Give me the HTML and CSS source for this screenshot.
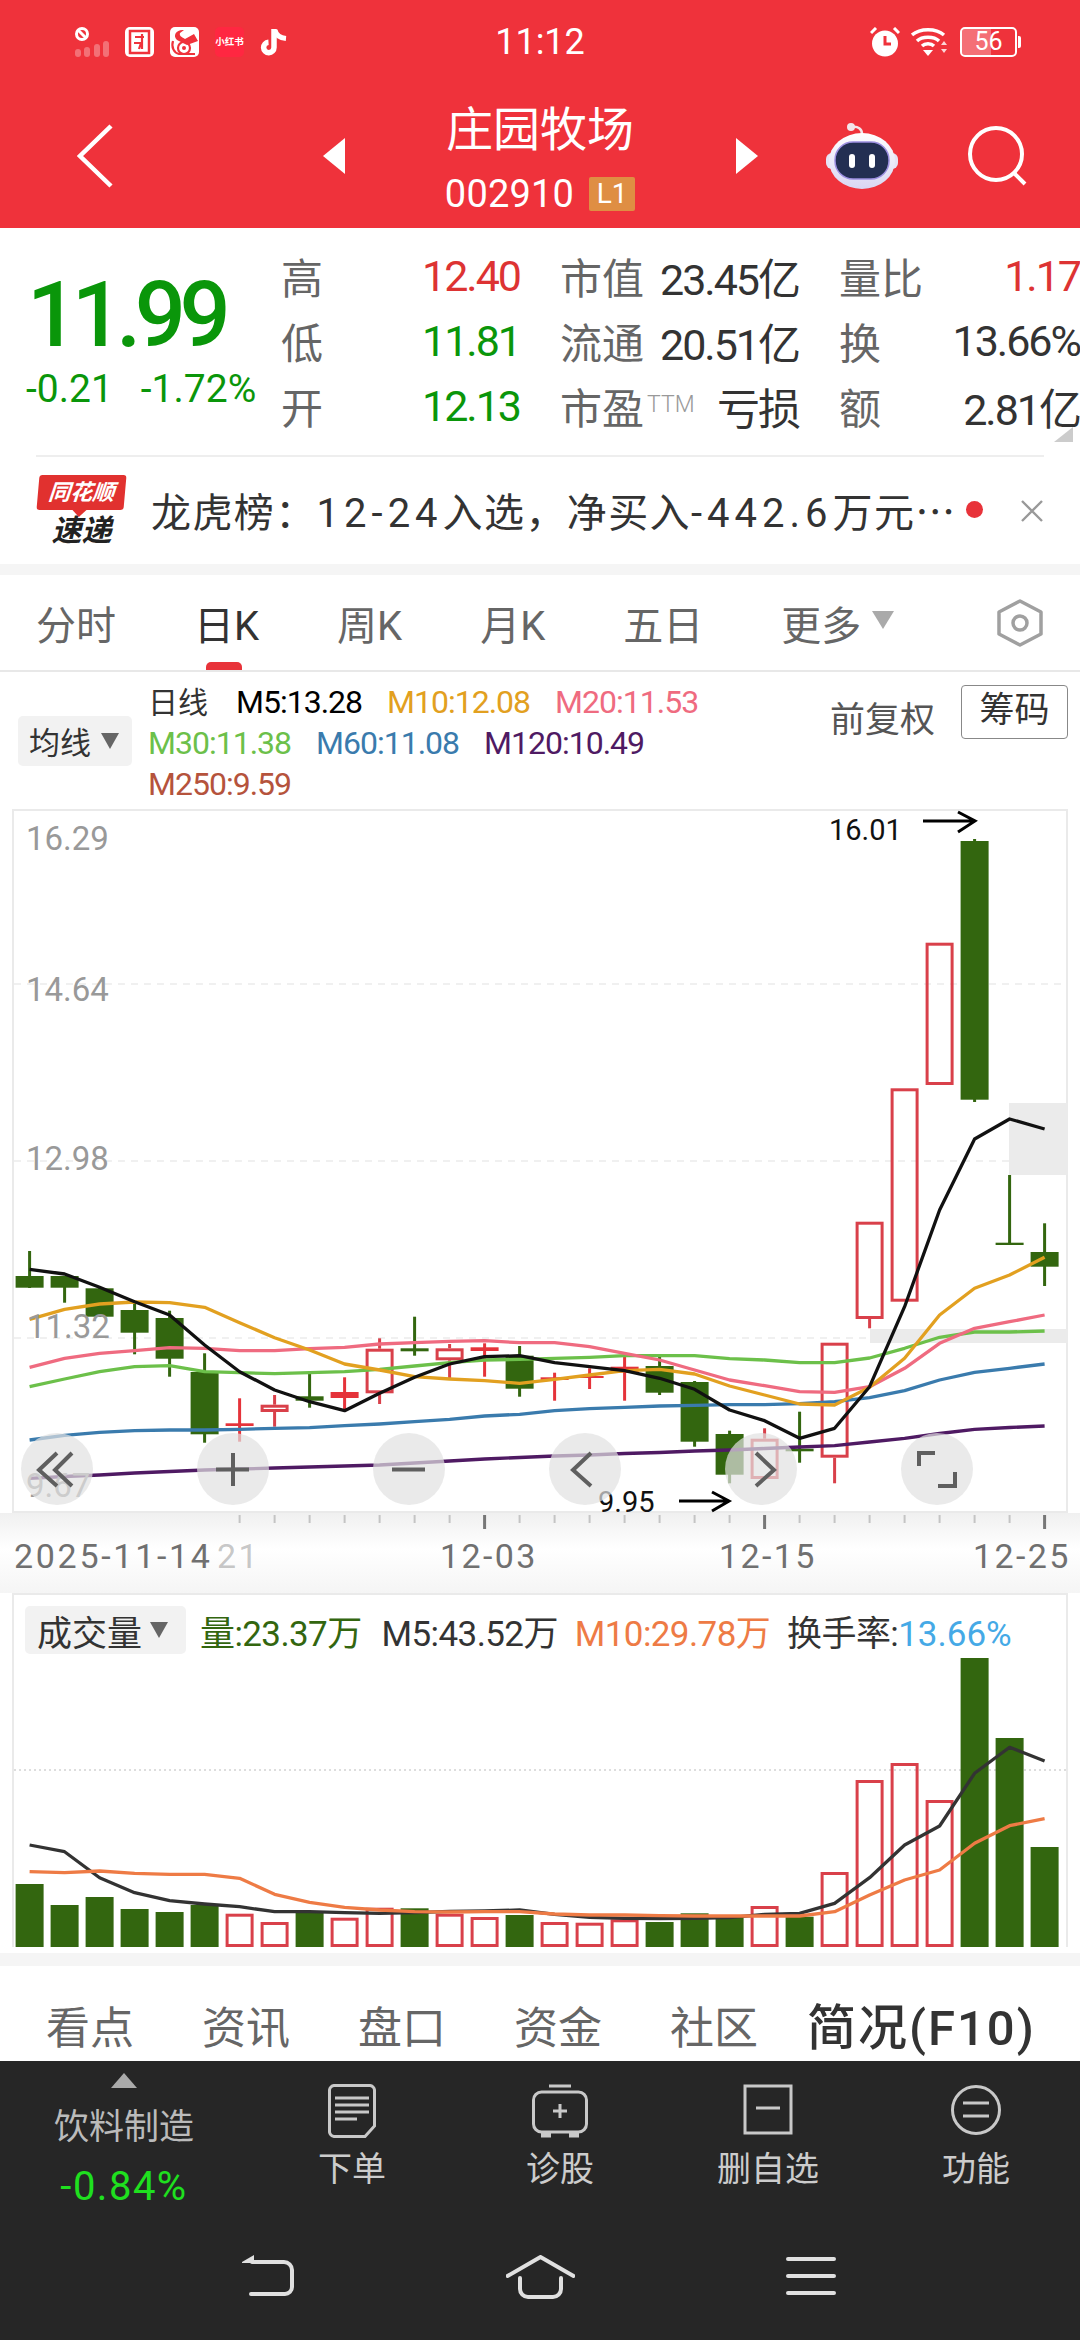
FILE: index.html
```html
<!DOCTYPE html>
<html lang="zh-CN">
<head>
  <meta charset="UTF-8">
  <meta name="viewport" content="width=device-width, initial-scale=1.0">
  <title>庄园牧场 002910</title>
  <link rel="stylesheet" href="styles.css">
</head>
<body>
  <div class="top">
    <div class="status-bar">
      <div class="status-left">
        <svg class="signal-icon" width="38" height="32" viewBox="0 0 38 32">
          <circle cx="8" cy="8" r="5.5" fill="none" stroke="#fff" stroke-width="3"/>
          <line x1="4" y1="4" x2="12" y2="12" stroke="#fff" stroke-width="3"/>
          <g fill="#fff" opacity="0.3">
            <rect x="1" y="23" width="6" height="8" rx="3"/>
            <rect x="10" y="21" width="6" height="10" rx="3"/>
            <rect x="20" y="18" width="6" height="13" rx="3"/>
            <rect x="29" y="15" width="6" height="16" rx="3"/>
          </g>
        </svg>
        <svg width="29" height="30" viewBox="0 0 29 30">
          <rect width="29" height="30" rx="5" fill="#fff"/>
          <rect x="5" y="4" width="19" height="22" fill="none" stroke="#ef323b" stroke-width="2.5"/>
          <path d="M10 10H19M9 16H16L14 22M17 7V22" fill="none" stroke="#ef323b" stroke-width="2.2"/>
        </svg>
        <svg width="29" height="30" viewBox="0 0 29 30">
          <rect width="29" height="30" rx="5" fill="#fff"/>
          <path d="M7 13C2 8 7 2 14 3L10 6C9 9 12 10 15 12L24 7L28 14L17 18" fill="#ef323b"/>
          <circle cx="14" cy="21" r="6" fill="none" stroke="#ef323b" stroke-width="2.2"/>
          <circle cx="14" cy="21" r="2" fill="#ef323b"/>
          <path d="M3 14C1 20 4 26 9 27H25" fill="none" stroke="#ef323b" stroke-width="2.2"/>
        </svg>
        <span class="xhs-icon">小红书</span>
        <svg width="27" height="30" viewBox="0 0 27 30">
          <path d="M14 2V20.5A5.2 5.2 0 1 1 8.5 15.3" fill="none" stroke="#fff" stroke-width="5.5"/>
          <path d="M15 3C16 8 20 11 26 11.5" fill="none" stroke="#fff" stroke-width="5"/>
        </svg>
      </div>
      <div class="status-time">11:12</div>
      <div class="status-right">
        <svg width="30" height="30" viewBox="0 0 30 30">
          <circle cx="15" cy="16.5" r="13" fill="#fff"/>
          <path d="M15 9V17H21" fill="none" stroke="#ef323b" stroke-width="3"/>
          <path d="M1 6L6 1M29 6L24 1" stroke="#fff" stroke-width="3"/>
        </svg>
        <svg width="38" height="30" viewBox="0 0 38 30">
          <g fill="none" stroke="#fff" stroke-width="3.4">
            <path d="M1 8C9 1 25 1 33 8"/>
            <path d="M6 14C11 9 23 9 28 14"/>
            <path d="M11 19C14 16 20 16 23 19"/>
          </g>
          <path d="M12 23H22L17 29Z" fill="#fff"/>
          <path d="M30 18L33 14L36 18ZM30 22H36L33 26Z" fill="#fff" opacity="0.8"/>
        </svg>
        <div class="battery">
          <div class="battery-level"></div>
          <span class="battery-num">56</span>
        </div>
      </div>
    </div>
    <div class="nav">
      <svg class="nav-back" width="36" height="64" viewBox="0 0 36 64">
        <path d="M34 2L3 32L34 62" fill="none" stroke="#fff" stroke-width="4.5"/>
      </svg>
      <div class="nav-center">
        <svg width="22" height="36" viewBox="0 0 22 36"><path d="M22 0V36L0 18Z" fill="#fff"/></svg>
        <div class="stock-name">
          <div class="stock-title">庄园牧场</div>
          <div class="stock-code-row">
            <span class="stock-code">002910</span>
            <span class="level-badge">L1</span>
          </div>
        </div>
        <svg width="22" height="36" viewBox="0 0 22 36"><path d="M0 0V36L22 18Z" fill="#fff"/></svg>
      </div>
      <div class="nav-right">
        <svg width="72" height="66" viewBox="0 0 72 66">
          <defs>
            <linearGradient id="robot-head" x1="0" y1="0" x2="0" y2="1">
              <stop offset="0" stop-color="#ffffff"/>
              <stop offset="1" stop-color="#d9d6f2"/>
            </linearGradient>
          </defs>
          <circle cx="25" cy="4" r="4" fill="#f3e6ea"/>
          <path d="M26 4C32 3 36 6 36 11" fill="none" stroke="#f3e6ea" stroke-width="2.5"/>
          <rect x="0" y="30" width="72" height="16" rx="6" fill="#e6e3f5"/>
          <ellipse cx="36" cy="38" rx="33" ry="28" fill="url(#robot-head)"/>
          <rect x="9" y="19" width="54" height="37" rx="18" fill="#232f52" stroke="#9c8fe0" stroke-width="1.5"/>
          <rect x="23" y="31" width="6" height="14" rx="3" fill="#fff"/>
          <rect x="43" y="31" width="6" height="14" rx="3" fill="#fff"/>
        </svg>
        <svg width="60" height="60" viewBox="0 0 60 60">
          <circle cx="29" cy="28" r="26" fill="none" stroke="#fff" stroke-width="4"/>
          <line x1="47" y1="47" x2="58" y2="58" stroke="#fff" stroke-width="4"/>
        </svg>
      </div>
    </div>
  </div>

  <div class="quote">
    <div class="price-block">
      <div class="price">11.99</div>
      <div class="price-change">
        <span>-0.21</span>
        <span>-1.72%</span>
      </div>
    </div>
    <div class="quote-grid">
      <div class="quote-cell"><span class="quote-label">高</span><span class="quote-value up">12.40</span></div>
      <div class="quote-cell"><span class="quote-label">市值</span><span class="quote-value">23.45亿</span></div>
      <div class="quote-cell"><span class="quote-label">量比</span><span class="quote-value up">1.17</span></div>
      <div class="quote-cell"><span class="quote-label">低</span><span class="quote-value down">11.81</span></div>
      <div class="quote-cell"><span class="quote-label">流通</span><span class="quote-value">20.51亿</span></div>
      <div class="quote-cell"><span class="quote-label">换</span><span class="quote-value">13.66%</span></div>
      <div class="quote-cell"><span class="quote-label">开</span><span class="quote-value down">12.13</span></div>
      <div class="quote-cell"><span class="quote-label">市盈<sup class="ttm">TTM</sup></span><span class="quote-value">亏损</span></div>
      <div class="quote-cell"><span class="quote-label">额</span><span class="quote-value">2.81亿</span></div>
    </div>
    <div class="quote-corner"></div>
  </div>
  <div class="divider"></div>

  <div class="news">
    <div class="news-logo">
      <div class="news-flag"><span>同花顺</span></div>
      <div class="news-sub">速递</div>
    </div>
    <div class="news-text">龙虎榜：<span class="news-num">12-24</span>入选，净买入<span class="news-num">-442.6</span>万元<span class="news-more">…</span></div>
    <div class="news-dot"></div>
    <svg class="news-close" width="22" height="22" viewBox="0 0 22 22">
      <path d="M1 1L21 21M21 1L1 21" stroke="#999" stroke-width="2.4"/>
    </svg>
  </div>
  <div class="gap"></div>

  <div class="period-tabs">
    <div class="period-tab">分时</div>
    <div class="period-tab active">日K</div>
    <div class="period-tab">周K</div>
    <div class="period-tab">月K</div>
    <div class="period-tab">五日</div>
    <div class="period-tab">更多
      <svg class="tab-arrow" width="22" height="18" viewBox="0 0 22 18"><path d="M0 0H22L11 18Z" fill="#aaa"/></svg>
    </div>
    <svg class="tab-settings" width="48" height="48" viewBox="0 0 48 48">
      <path d="M24 2L45 13V35L24 46L3 35V13Z" fill="none" stroke="#a0a0a0" stroke-width="3.5" stroke-linejoin="round"/>
      <circle cx="24" cy="24" r="7" fill="none" stroke="#a0a0a0" stroke-width="3.5"/>
    </svg>
  </div>

  <div class="ma-legend">
    <div class="select-tag ma-tag">均线
      <svg width="18" height="16" viewBox="0 0 18 16"><path d="M0 0H18L9 16Z" fill="#666"/></svg>
    </div>
    <div class="ma-rows">
      <div class="ma-row"><span class="ma-day">日线</span><span class="m5">M5:13.28</span><span class="m10">M10:12.08</span><span class="m20">M20:11.53</span></div>
      <div class="ma-row"><span class="m30">M30:11.38</span><span class="m60">M60:11.08</span><span class="m120">M120:10.49</span></div>
      <div class="ma-row"><span class="m250">M250:9.59</span></div>
    </div>
    <div class="ma-right">
      <span class="ma-adjust">前复权</span>
      <span class="ma-chips">筹码</span>
    </div>
  </div>

  <div class="kline">
    <svg id="kline-svg" width="1056" height="704" viewBox="12 809 1056 704"></svg>
    <div class="kline-buttons">
      <div class="round-btn">
        <svg width="72" height="72" viewBox="0 0 72 72"><path d="M36 20L18 37L36 53M51 20L34 37L51 53"/></svg>
      </div>
      <div class="round-btn">
        <svg width="72" height="72" viewBox="0 0 72 72"><path d="M19 36.5H52M36 20V53"/></svg>
      </div>
      <div class="round-btn">
        <svg width="72" height="72" viewBox="0 0 72 72"><path d="M19 36.5H52"/></svg>
      </div>
      <div class="round-btn">
        <svg width="72" height="72" viewBox="0 0 72 72"><path d="M42 20L24 37L42 53"/></svg>
      </div>
      <div class="round-btn">
        <svg width="72" height="72" viewBox="0 0 72 72"><path d="M31 20L49 37L31 53"/></svg>
      </div>
      <div class="round-btn">
        <svg width="72" height="72" viewBox="0 0 72 72"><path d="M18 33V20H34M37 53H54V39"/></svg>
      </div>
    </div>
  </div>
  <svg id="axis-svg" class="date-axis" width="1080" height="80" viewBox="0 1513 1080 80"></svg>

  <div class="volume">
    <div class="vol-legend">
      <div class="select-tag vol-tag">成交量
        <svg width="18" height="16" viewBox="0 0 18 16"><path d="M0 0H18L9 16Z" fill="#666"/></svg>
      </div>
      <span class="vol-now">量:23.37万</span>
      <span class="vol-m5">M5:43.52万</span>
      <span class="vol-m10">M10:29.78万</span>
      <span class="vol-rate">换手率:<em>13.66%</em></span>
    </div>
    <svg id="volume-svg" width="1056" height="292" viewBox="12 1655 1056 292"></svg>
  </div>
  <div class="gap gap-volume"></div>

  <div class="sub-tabs">
    <div class="sub-tab">看点</div>
    <div class="sub-tab">资讯</div>
    <div class="sub-tab">盘口</div>
    <div class="sub-tab">资金</div>
    <div class="sub-tab">社区</div>
    <div class="sub-tab active">简况(F10)</div>
  </div>

  <div class="bottom">
    <div class="actions">
      <div class="sector">
        <svg width="26" height="15" viewBox="0 0 26 15"><path d="M13 0L26 15H0Z" fill="#aaa"/></svg>
        <div class="sector-name">饮料制造</div>
        <div class="sector-change">-0.84%</div>
      </div>
      <div class="action">
        <svg width="48" height="54" viewBox="0 0 48 54">
          <path d="M7 1.5H41A5 5 0 0 1 46.5 7V42L37 52.5H7A5 5 0 0 1 1.5 47V7A5 5 0 0 1 7 1.5Z"/>
          <path d="M7 14H41M7 21H41M7 28H41M7 35H29"/>
        </svg>
        <div class="action-label">下单</div>
      </div>
      <div class="action">
        <svg width="56" height="54" viewBox="0 0 56 54">
          <path d="M17 2H39"/>
          <rect x="1.5" y="8" width="53" height="40" rx="8"/>
          <path d="M21 27H35M28 20V34"/>
          <path class="thick" d="M9 51H19M37 51H47"/>
        </svg>
        <div class="action-label">诊股</div>
      </div>
      <div class="action">
        <svg width="50" height="54" viewBox="0 0 50 54">
          <rect x="2" y="2" width="46" height="47"/>
          <path d="M13 24H37"/>
        </svg>
        <div class="action-label">删自选</div>
      </div>
      <div class="action">
        <svg width="50" height="54" viewBox="0 0 50 54">
          <circle cx="25" cy="26" r="23.5"/>
          <path d="M12 19H38M12 32H38"/>
        </svg>
        <div class="action-label">功能</div>
      </div>
    </div>
    <div class="system-nav">
      <svg width="53" height="42" viewBox="0 0 53 42">
        <path class="fill" d="M0 7L12 0V8H0Z"/>
        <path d="M10 7H42A8 8 0 0 1 50 15V32A7 7 0 0 1 43 39H9"/>
      </svg>
      <svg width="69" height="44" viewBox="0 0 69 44">
        <path d="M1.5 21L34.5 2L67.5 21"/>
        <path d="M14 23V34A8 8 0 0 0 22 42H47A8 8 0 0 0 55 34V23"/>
      </svg>
      <svg width="50" height="42" viewBox="0 0 50 42">
        <path d="M2 4H48M2 21H48M2 38H48"/>
      </svg>
    </div>
  </div>

  <script src="chart.js"></script>
</body>
</html>
```

FILE: styles.css
```css
* {
  box-sizing: border-box;
}

body {
  font-family: Roboto, "Noto Sans CJK SC", sans-serif;
  margin: 0;
  width: 1080px;
  height: 2340px;
  overflow: hidden;
  background-color: #fff;
  color: #333;
}

svg {
  display: block;
}

/* red header */
.top {
  height: 228px;
  background-color: #ef323b;
  color: #fff;
}

.status-bar {
  display: grid;
  grid-template-columns: 1fr auto 1fr;
  align-items: center;
  height: 84px;
}

.status-left {
  display: flex;
  align-items: center;
  gap: 16px;
  padding-left: 74px;
}

.signal-icon {
  margin-right: -3px;
}

.xhs-icon {
  width: 29px;
  height: 30px;
  background-color: #ff2741;
  border-radius: 5px;
  font-size: 9.5px;
  font-weight: 700;
  line-height: 30px;
  text-align: center;
  white-space: nowrap;
}

.status-time {
  font-size: 36px;
}

.status-right {
  display: flex;
  justify-content: flex-end;
  align-items: center;
  gap: 11px;
  padding-right: 63px;
}

.battery {
  position: relative;
  width: 57px;
  height: 30px;
  border: 2px solid #fff;
  border-radius: 5px;
  text-align: center;
  font-size: 25px;
  line-height: 26px;
}

.battery::after {
  content: "";
  position: absolute;
  right: -6px;
  top: 7px;
  width: 3px;
  height: 12px;
  background-color: #fff;
  border-radius: 0 2px 2px 0;
}

.battery-level {
  position: absolute;
  left: 0;
  top: 0;
  bottom: 0;
  width: 54%;
  background-color: rgba(255, 255, 255, 0.3);
  border-radius: 3px 0 0 3px;
}

.battery-num {
  position: relative;
}

.nav {
  display: grid;
  grid-template-columns: 1fr 435px 1fr;
  align-items: center;
  height: 144px;
}

.nav-back {
  margin-left: 77px;
}

.nav-center {
  display: flex;
  justify-content: space-between;
  align-items: center;
}

.stock-name {
  display: flex;
  flex-direction: column;
  align-items: center;
  gap: 12px;
  margin-top: 6px;
}

.stock-title {
  font-size: 47px;
  line-height: 58px;
}

.stock-code-row {
  display: flex;
  align-items: center;
  gap: 15px;
  height: 46px;
}

.stock-code {
  font-size: 38px;
  letter-spacing: 0.2px;
}

.level-badge {
  width: 46px;
  height: 34px;
  background-color: #df8e43;
  border-radius: 2px;
  font-size: 28px;
  line-height: 34px;
  text-align: center;
}

.nav-right {
  display: flex;
  align-items: center;
  gap: 69px;
  padding-left: 68px;
}

/* quote block */
.quote {
  position: relative;
  display: flex;
  height: 227px;
}

.price-block {
  width: 281px;
  padding: 48px 0 0 27px;
  color: #0a960a;
}

.price {
  font-size: 90px;
  font-weight: 500;
  line-height: 80px;
  letter-spacing: -6.5px;
}

.price-change {
  display: flex;
  gap: 28px;
  margin: 13px 0 0 -1px;
  font-size: 39px;
  line-height: 40px;
}

.quote-grid {
  display: grid;
  grid-template-columns: 239px 239px 241px;
  grid-auto-rows: 65px;
  column-gap: 40px;
  padding-top: 15px;
  white-space: nowrap;
}

.quote-cell {
  display: flex;
  justify-content: space-between;
  align-items: center;
}

.quote-label {
  font-size: 42px;
  color: #666;
}

.ttm {
  margin-left: 3px;
  font-size: 23px;
  font-weight: 300;
  color: #999;
  vertical-align: 12px;
  line-height: 0;
}

.quote-value {
  font-size: 43px;
  letter-spacing: -2px;
  color: #333;
}

.quote-value.up {
  color: #dd3333;
}

.quote-value.down {
  color: #0a960a;
}

.quote-corner {
  position: absolute;
  right: 7px;
  top: 199px;
  width: 19px;
  height: 15px;
  background-color: #ccc;
  clip-path: polygon(100% 0, 100% 100%, 0 100%);
}

.divider {
  height: 2px;
  margin: 0 36px;
  background-color: #eee;
}

/* news row */
.news {
  display: flex;
  align-items: center;
  height: 107px;
  padding: 0 37px 0 38px;
}

.news-logo {
  width: 87px;
  margin-right: 26px;
  text-align: center;
}

.news-flag {
  position: relative;
  height: 35px;
  background-color: #e1312f;
  border-radius: 3px;
  transform: skewX(-5deg);
  color: #fff;
  font-size: 22px;
  font-style: italic;
  font-weight: 700;
  line-height: 35px;
  white-space: nowrap;
}

.news-flag::after {
  content: "";
  position: absolute;
  left: 36px;
  bottom: -7px;
  border-left: 7px solid transparent;
  border-right: 7px solid transparent;
  border-top: 7px solid #e1312f;
}

.news-sub {
  margin-top: 6px;
  font-size: 30px;
  font-style: italic;
  font-weight: 700;
  line-height: 30px;
  color: #222;
}

.news-text {
  margin-top: -2px;
  font-size: 40px;
  letter-spacing: 1.4px;
  color: #333;
  white-space: nowrap;
}

.news-num {
  letter-spacing: 5px;
}

.news-more {
  font-family: "Noto Sans CJK SC", sans-serif;
}

.news-dot {
  width: 17px;
  height: 17px;
  margin-left: auto;
  margin-top: -2px;
  background-color: #e8333a;
  border-radius: 50%;
}

.news-close {
  margin-left: 38px;
}

.gap {
  height: 11px;
  background-color: #f5f5f5;
}

.gap-volume {
  height: 13px;
  margin-top: 6px;
}

/* period tabs */
.period-tabs {
  display: flex;
  align-items: center;
  gap: 78px;
  height: 97px;
  padding: 0 36px;
  border-bottom: 2px solid #e8e8e8;
}

.period-tab {
  position: relative;
  display: flex;
  align-items: center;
  height: 95px;
  font-size: 40px;
  color: #666;
}

.period-tab.active {
  color: #333;
}

.period-tab.active::after {
  content: "";
  position: absolute;
  left: 12px;
  bottom: 0;
  width: 36px;
  height: 8px;
  background-color: #e8333a;
  border-radius: 5px 5px 0 0;
}

.tab-arrow {
  margin-left: 11px;
  margin-top: -6px;
}

.tab-settings {
  margin-left: auto;
}

/* moving average legend */
.ma-legend {
  display: flex;
  height: 137px;
  padding: 0 12px 0 18px;
}

.select-tag {
  display: flex;
  align-items: center;
  background-color: #f2f2f2;
  border-radius: 5px;
  color: #333;
}

.ma-tag {
  gap: 10px;
  align-self: center;
  width: 114px;
  height: 50px;
  margin-right: 16px;
  padding-left: 11px;
  font-size: 31px;
}

.ma-rows {
  padding-top: 10px;
}

.ma-row {
  display: flex;
  gap: 25px;
  font-size: 32px;
  letter-spacing: -1px;
  line-height: 41px;
}

.ma-day {
  margin-right: 3px;
  font-size: 30px;
  letter-spacing: 0;
  color: #333;
}

.m5 { color: #000; }
.m10 { color: #e2a020; }
.m20 { color: #ef6b80; }
.m30 { color: #6cc04a; }
.m60 { color: #3a7bad; }
.m120 { color: #4f1a63; }
.m250 { color: #b5533c; }

.ma-right {
  display: flex;
  align-items: flex-start;
  gap: 26px;
  margin: 13px 0 0 auto;
  align-self: flex-start;
  font-size: 35px;
}

.ma-adjust {
  margin-top: 6px;
  color: #555;
}

.ma-chips {
  width: 107px;
  height: 54px;
  border: 1px solid #888;
  border-radius: 4px;
  color: #333;
  line-height: 50px;
  text-align: center;
}

/* kline chart */
.kline {
  position: relative;
  width: 1056px;
  height: 704px;
  margin-left: 12px;
  box-shadow: inset 0 0 0 2px #eaeaea;
}

#kline-svg {
  overflow: visible;
}

.kline svg text {
  font-family: Roboto, sans-serif;
}

.price-label {
  font-size: 33px;
  fill: #999;
}

.extreme-label {
  font-size: 29px;
  fill: #111;
}

.kline-buttons {
  position: absolute;
  left: 9px;
  top: 624px;
  display: flex;
  justify-content: space-between;
  width: 952px;
}

.round-btn {
  width: 72px;
  height: 72px;
  background-color: rgba(225, 225, 225, 0.7);
  border-radius: 50%;
}

.round-btn path {
  fill: none;
  stroke: #5f5f5f;
  stroke-width: 4;
}

.date-axis {
  background: linear-gradient(to bottom, #f0f0f0 0, #fff 45%, #f5f5f5 100%);
}

.date-label {
  font-family: Roboto, sans-serif;
  font-size: 34px;
  letter-spacing: 2.4px;
  fill: #707070;
}

/* volume chart */
.volume {
  width: 1056px;
  height: 354px;
  margin-left: 12px;
  border-top: 2px solid #eaeaea;
  box-shadow: inset 2px 0 #eaeaea, inset -2px 0 #eaeaea;
}

.vol-legend {
  display: flex;
  align-items: center;
  height: 60px;
  padding: 10px 0 0 13px;
  font-size: 35px;
  letter-spacing: -0.6px;
  white-space: nowrap;
}

.vol-tag {
  gap: 8px;
  width: 161px;
  height: 48px;
  margin-right: 14px;
  padding-left: 12px;
  letter-spacing: 0;
}

.vol-now { color: #33660f; margin-right: 20px; }
.vol-m5 { color: #333; margin-right: 17px; }
.vol-m10 { color: #ee7b45; margin-right: 17px; }
.vol-rate { color: #333; }
.vol-rate em { font-style: normal; letter-spacing: 0; color: #45a9e6; }

/* sub tabs */
.sub-tabs {
  display: flex;
  gap: 68px;
  height: 95px;
  padding: 33px 0 0 46px;
  white-space: nowrap;
}

.sub-tab {
  font-size: 44px;
  line-height: 60px;
  color: #666;
}

.sub-tab.active {
  margin-left: -19px;
  font-size: 49px;
  font-weight: 500;
  letter-spacing: 2px;
  color: #333;
}

/* dark bottom bar */
.bottom {
  height: 279px;
  background-color: #262626;
}

.actions {
  display: grid;
  grid-template-columns: 248px repeat(4, 208px);
  height: 170px;
}

.sector {
  display: flex;
  flex-direction: column;
  align-items: center;
  padding-top: 12px;
}

.sector-name {
  margin-top: 17px;
  font-size: 35px;
  line-height: 46px;
  color: #bbb;
}

.sector-change {
  margin-top: 14px;
  font-size: 40px;
  letter-spacing: 1.5px;
  line-height: 44px;
  color: #1fe01f;
}

.action {
  display: flex;
  flex-direction: column;
  align-items: center;
  padding-top: 23px;
}

.action svg * {
  fill: none;
  stroke: #c8c8c8;
  stroke-width: 3;
}

.action svg .thick {
  stroke-width: 5;
}

.action-label {
  margin-top: 11px;
  font-size: 34px;
  line-height: 40px;
  color: #ccc;
}

.system-nav {
  display: flex;
  align-items: flex-start;
  gap: 211px;
  margin-top: 24px;
  padding-left: 242px;
}

.system-nav path {
  fill: none;
  stroke: #e0e0e0;
  stroke-width: 4;
  stroke-linecap: round;
  stroke-linejoin: round;
}

.system-nav .fill {
  fill: #e0e0e0;
  stroke: none;
}
```

FILE: chart.js
```js
// Chart data is kept in page pixels, the svg viewBoxes line up with that.
const GREEN = '#33660f';
const RED = '#e5333a';
const HOLLOW = '#d9404a';

// top, bottom, wick top, wick bottom, type (g solid green, r solid red, h hollow red)
const candles = [
  [1276, 1287.7, 1251, 1288, 'g'],
  [1276, 1287.7, 1276, 1302.7, 'g'],
  [1288.3, 1316.7, 1286.7, 1316.7, 'g'],
  [1310, 1332.7, 1303.3, 1354.3, 'g'],
  [1318, 1358.7, 1310.7, 1376.7, 'g'],
  [1372, 1434.3, 1353.3, 1442.7, 'g'],
  [1423.3, 1426, 1398.3, 1441.7, 'r'],
  [1404.7, 1412, 1395, 1426.7, 'h'],
  [1396.3, 1400.7, 1371.7, 1407.7, 'g'],
  [1392, 1398, 1377.3, 1411.7, 'r'],
  [1348.7, 1393.3, 1338.3, 1404, 'h'],
  [1348.3, 1351.3, 1316.7, 1355.7, 'g'],
  [1348.3, 1360.3, 1344, 1378.3, 'h'],
  [1347.3, 1351, 1343.3, 1376.7, 'r'],
  [1355.7, 1388.7, 1346, 1396.7, 'g'],
  [1377.3, 1380, 1372.7, 1400.7, 'r'],
  [1376, 1378, 1368.3, 1389, 'r'],
  [1366.7, 1372.7, 1356.7, 1400.7, 'r'],
  [1366, 1392.7, 1354, 1395, 'g'],
  [1382, 1441.7, 1381, 1446.7, 'g'],
  [1434, 1474.7, 1430.7, 1483.3, 'g'],
  [1438.7, 1479, 1428.3, 1479, 'h'],
  [1448.7, 1451.3, 1411.7, 1462.7, 'g'],
  [1342.7, 1457.7, 1342.7, 1483.3, 'h'],
  [1221.7, 1319, 1221.7, 1328.3, 'h'],
  [1088.3, 1301.7, 1088.3, 1301.7, 'h'],
  [942.7, 1085, 942.7, 1085, 'h'],
  [841, 1099.7, 839, 1102, 'g'],
  [1242.7, 1245, 1175, 1245, 'g'],
  [1252, 1266.7, 1223.3, 1286, 'g']
];

const maLines = [
  { color: '#4f1a63', ys: [1478.3, 1476.5, 1475, 1473, 1471.5, 1470, 1469, 1468, 1467, 1466, 1465, 1463, 1461, 1459, 1457.5, 1456, 1455, 1453.5, 1452.5, 1451, 1450, 1448.5, 1447, 1445.7, 1442, 1438.3, 1433.5, 1429.3, 1427.5, 1426] },
  { color: '#3a7bad', ys: [1440, 1435.3, 1432.3, 1430.7, 1430, 1430, 1429.3, 1428.3, 1427.7, 1425.7, 1424, 1421.7, 1419.3, 1416, 1414.3, 1410.7, 1408.7, 1407.3, 1406, 1405.3, 1404.7, 1404.7, 1403.7, 1401.7, 1397.7, 1390.7, 1380, 1372.3, 1368.3, 1364] },
  { color: '#6cc04a', ys: [1386.7, 1379, 1371.7, 1366.7, 1365.7, 1371.7, 1372.7, 1373.7, 1372.7, 1371.7, 1369.3, 1366, 1362.7, 1360, 1359.3, 1358.3, 1357.3, 1355.7, 1355.7, 1355.7, 1358.7, 1360, 1362.7, 1362.7, 1358, 1348.3, 1337.3, 1332, 1332, 1331] },
  { color: '#ef6b80', ys: [1367.3, 1358.3, 1353.3, 1350.7, 1347.7, 1348.3, 1350.7, 1350.7, 1348.7, 1347.3, 1344, 1342.7, 1341.3, 1340.7, 1342.7, 1342.7, 1346.7, 1353.3, 1360, 1370, 1380, 1385.7, 1391.7, 1392.3, 1386.7, 1368.3, 1343.3, 1328.3, 1321.7, 1315] },
  { color: '#e2a020', ys: [1319.3, 1309.3, 1304, 1302, 1302.7, 1307.3, 1322.7, 1337.7, 1350, 1364, 1370, 1376.7, 1379, 1380.7, 1383.3, 1379.3, 1375, 1370.7, 1369.3, 1374, 1386, 1395, 1404, 1405, 1387.3, 1358.3, 1315, 1288.3, 1275, 1257.3] },
  { color: '#111', ys: [1269.3, 1274, 1287.3, 1301.7, 1315, 1345, 1371.7, 1390, 1401.7, 1410.7, 1393.3, 1377.3, 1364, 1356.7, 1355.7, 1362.7, 1366.7, 1370.7, 1378.3, 1389.3, 1410, 1420.7, 1438.3, 1428.3, 1386.7, 1306.7, 1210, 1139, 1119, 1129] }
];

// bar top and type for the volume chart, bars all end at 1947
const volumes = [
  [1884, 'g'], [1905, 'g'], [1897, 'g'], [1909, 'g'], [1912, 'g'], [1905, 'g'],
  [1913.7, 'h'], [1922, 'h'], [1912.7, 'g'], [1917.7, 'h'], [1907.7, 'h'], [1908.3, 'g'],
  [1913.7, 'h'], [1917, 'h'], [1915, 'g'], [1922, 'h'], [1922.7, 'h'], [1919.3, 'h'],
  [1922, 'g'], [1913.3, 'g'], [1916.7, 'g'], [1906, 'h'], [1916.7, 'g'], [1872, 'h'],
  [1780, 'h'], [1763, 'h'], [1800, 'h'], [1658, 'g'], [1738, 'g'], [1847, 'g']
];

const volLines = [
  { color: '#333', ys: [1845, 1851.7, 1877.7, 1892.7, 1900.7, 1904, 1906.7, 1911.7, 1911.7, 1912.7, 1913.3, 1912.7, 1911.3, 1911, 1910, 1914.3, 1917.3, 1918.3, 1918.7, 1918.3, 1917.7, 1914.3, 1913.3, 1903.3, 1877.7, 1845, 1826, 1773.3, 1747.3, 1761] },
  { color: '#ee7b45', ys: [1871.7, 1872.7, 1871, 1873.3, 1874.3, 1874.3, 1878.3, 1894.3, 1902.3, 1907.3, 1910, 1911.7, 1912, 1911.7, 1911.7, 1914, 1915, 1915, 1915.7, 1916, 1916, 1916, 1916, 1911.7, 1895, 1880, 1870, 1843.3, 1825.7, 1818.7] }
];

function candleX(i) {
  return 29.6 + 35 * i;
}

function line(x1, y1, x2, y2, color, width) {
  return `<line x1="${x1}" y1="${y1}" x2="${x2}" y2="${y2}" stroke="${color}" stroke-width="${width}"/>`;
}

function rect(x, y, w, h, fill, stroke) {
  const edge = stroke ? `stroke="${stroke}" stroke-width="3"` : '';
  return `<rect x="${x}" y="${y}" width="${w}" height="${h}" fill="${fill}" ${edge}/>`;
}

function polyline(ys, color, width) {
  const points = ys.map((y, i) => `${candleX(i)},${y}`).join(' ');
  return `<polyline points="${points}" fill="none" stroke="${color}" stroke-width="${width}" stroke-linejoin="round"/>`;
}

function text(x, y, cls, value, extra) {
  return `<text x="${x}" y="${y}" class="${cls}" ${extra || ''}>${value}</text>`;
}

function drawCandle(c, i) {
  const [top, bottom, wickTop, wickBottom, type] = c;
  const x = candleX(i);
  if (type === 'h') {
    let out = rect(x - 12.5, top + 1.5, 25, bottom - top - 3, 'none', HOLLOW);
    if (wickTop < top) out += line(x, wickTop, x, top, HOLLOW, 3);
    if (wickBottom > bottom) out += line(x, bottom, x, wickBottom, HOLLOW, 3);
    return out;
  }
  const color = type === 'g' ? GREEN : RED;
  return line(x, wickTop, x, wickBottom, color, 3) + rect(x - 14, top, 28, bottom - top, color);
}

function drawKline() {
  let out = '';
  [984, 1161, 1338].forEach((y) => {
    out += `<line x1="14" y1="${y}" x2="1066" y2="${y}" stroke="#ececec" stroke-width="1.5" stroke-dasharray="7 6"/>`;
  });
  out += rect(1009, 1103, 59, 72, '#ebebeb');
  out += rect(870, 1329, 198, 14, '#ebebeb');
  candles.forEach((c, i) => { out += drawCandle(c, i); });
  maLines.forEach((m) => { out += polyline(m.ys, m.color, 3.3); });
  out += text(26, 850, 'price-label', '16.29');
  out += text(26, 1001, 'price-label', '14.64');
  out += text(26, 1170, 'price-label', '12.98');
  out += text(27, 1338, 'price-label', '11.32');
  out += text(26, 1497, 'price-label', '9.67');
  out += text(829, 840, 'extreme-label', '16.01');
  out += `<path d="M923 821H974M958 812L975 821L958 832" fill="none" stroke="#000" stroke-width="3"/>`;
  out += text(598, 1512, 'extreme-label', '9.95');
  out += `<path d="M679 1501H728M712 1492L729 1501L712 1511" fill="none" stroke="#000" stroke-width="3"/>`;
  document.getElementById('kline-svg').innerHTML = out;
}

function drawAxis() {
  let out = '';
  for (let i = 6; i < 30; i++) {
    const major = i === 13 || i === 21 || i === 29;
    out += line(candleX(i), 1515, candleX(i), major ? 1529 : 1523, major ? '#777' : '#c4c4c4', major ? 3 : 2);
  }
  out += text(14, 1568, 'date-label', '2025-11-14', 'style="letter-spacing:2.7px"');
  out += text(217, 1568, 'date-label', '21', 'fill-opacity="0.4"');
  out += text(440, 1568, 'date-label', '12-03');
  out += text(719, 1568, 'date-label', '12-15');
  out += text(973, 1568, 'date-label', '12-25');
  document.getElementById('axis-svg').innerHTML = out;
}

function drawVolume() {
  let out = `<line x1="14" y1="1770" x2="1066" y2="1770" stroke="#ddd" stroke-width="2" stroke-dasharray="2 3"/>`;
  volumes.forEach(([top, type], i) => {
    const x = candleX(i);
    if (type === 'g') {
      out += rect(x - 14, top, 28, 1947 - top, GREEN);
    } else {
      out += rect(x - 12.5, top + 1.5, 25, 1947 - top - 3, 'none', HOLLOW);
    }
  });
  volLines.forEach((m) => { out += polyline(m.ys, m.color, 3.3); });
  document.getElementById('volume-svg').innerHTML = out;
}

drawKline();
drawAxis();
drawVolume();
```
